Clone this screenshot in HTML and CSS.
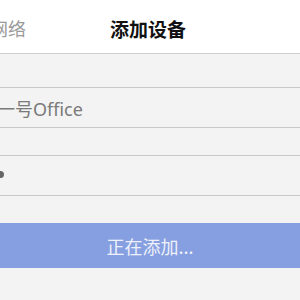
FILE: index.html
```html
<!DOCTYPE html>
<html>
<head>
<meta charset="utf-8">
<title>添加设备</title>
<link rel="stylesheet" href="styles.css">
</head>
<body>
<div class="navbar">
  <span class="nav-back">网络</span>
  <span class="nav-title">添加设备</span>
</div>

<div class="group first">
  <div class="row"><span class="row-text">一号Office</span></div>
</div>

<div class="group second">
  <div class="row"><span class="row-dot"></span></div>
</div>

<div class="button">正在添加...</div>
</body>
</html>
```

FILE: styles.css
```css
/* Add device screen */

body
{ margin: 0;
background-color: #f3f3f3;
font-family: "Noto Sans CJK SC", "Liberation Sans", sans-serif;
overflow: hidden;
}

div.navbar
{ position: relative;
height: 53px;
background-color: #ffffff;
border-bottom: 1px solid #cfcfcf;
display: flex;
align-items: center;
justify-content: center;
}

span.nav-back
{ position: absolute;
left: -10px;
top: 15px;
font-size: 18px;
color: #9a9a9a;
}

span.nav-title
{ font-size: 19px;
font-weight: bold;
color: #111111;
margin-left: -4px;
margin-top: 4px;
}

div.group
{ border-top: 1px solid #c8c8c8;
border-bottom: 1px solid #c8c8c8;
}

div.group.first
{ margin-top: 33px;
}

div.group.second
{ margin-top: 27px;
}

div.row
{ height: 39px;
display: flex;
align-items: center;
}

span.row-text
{ font-family: "Noto Sans", "Noto Sans CJK SC", sans-serif;
font-size: 18px;
color: #7a7a7a;
margin-left: -3px;
}

span.row-dot
{ width: 7px;
height: 7px;
border-radius: 50%;
background-color: #666666;
margin-left: -3px;
margin-top: -3px;
}

div.button
{ margin-top: 27px;
height: 45px;
background-color: #869fe0;
color: #eef1fb;
font-size: 18px;
display: flex;
align-items: center;
justify-content: center;
}
```
